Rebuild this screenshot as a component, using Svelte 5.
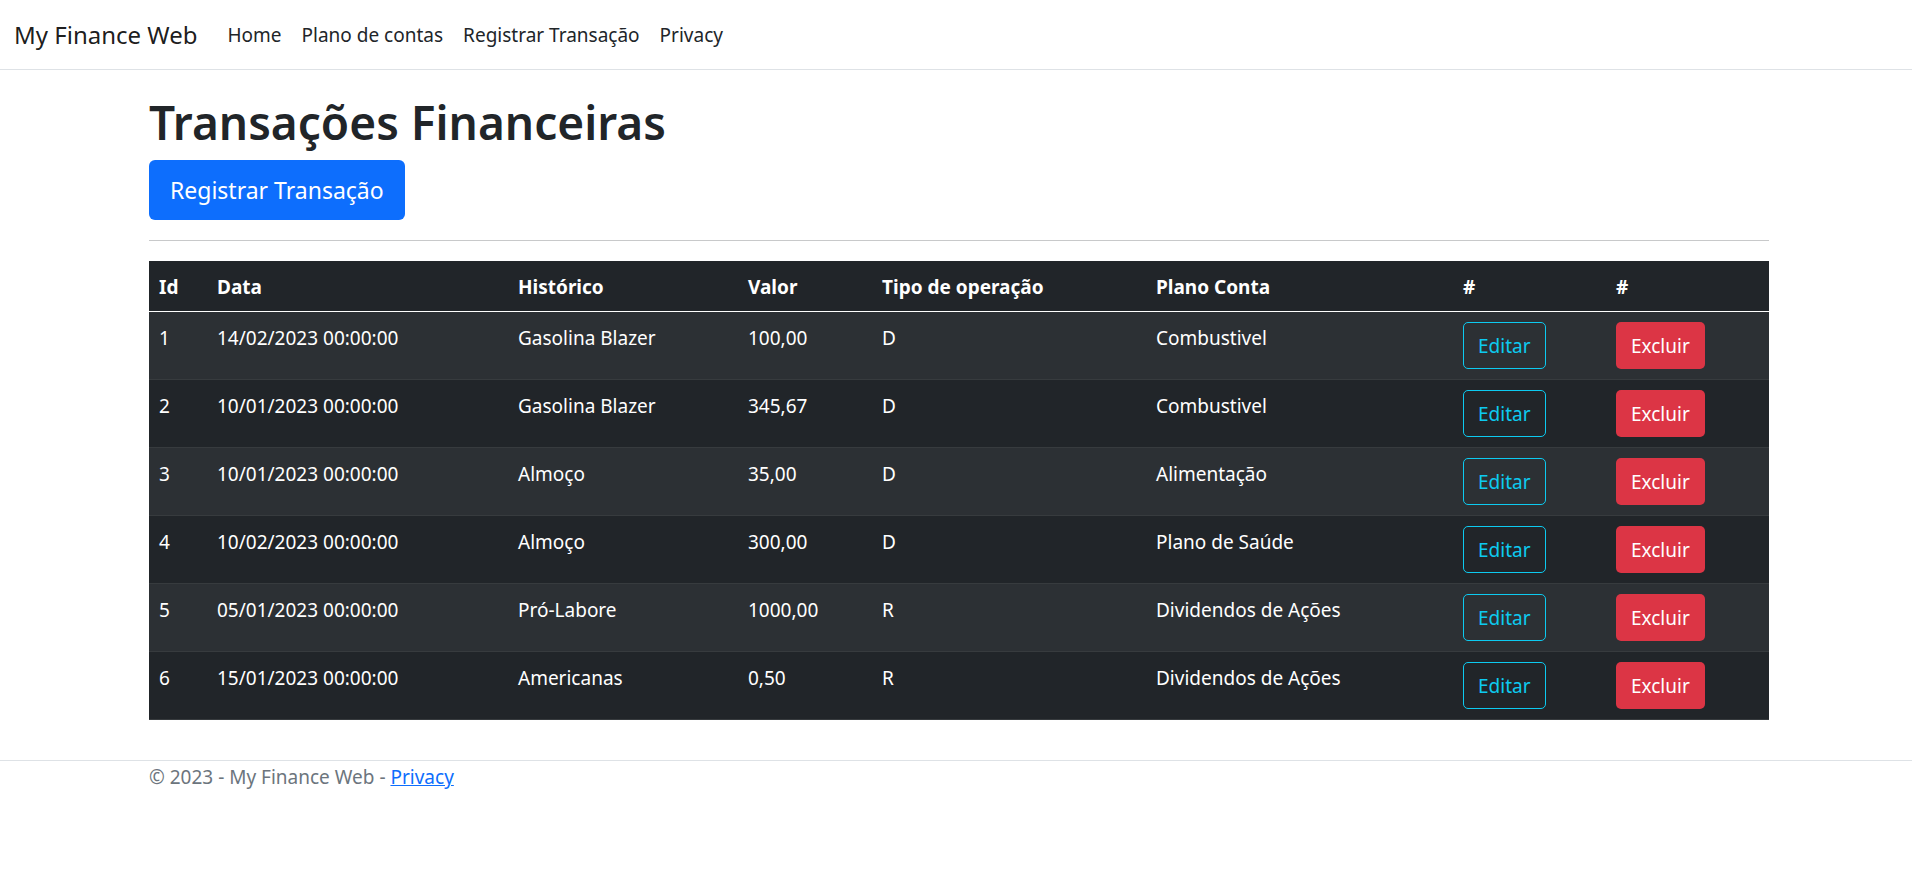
<script>
  const links = ['Home', 'Plano de contas', 'Registrar Transação', 'Privacy'];

  const transactions = [
    { id: 1, date: '14/02/2023 00:00:00', history: 'Gasolina Blazer', value: '100,00', type: 'D', account: 'Combustivel' },
    { id: 2, date: '10/01/2023 00:00:00', history: 'Gasolina Blazer', value: '345,67', type: 'D', account: 'Combustivel' },
    { id: 3, date: '10/01/2023 00:00:00', history: 'Almoço', value: '35,00', type: 'D', account: 'Alimentação' },
    { id: 4, date: '10/02/2023 00:00:00', history: 'Almoço', value: '300,00', type: 'D', account: 'Plano de Saúde' },
    { id: 5, date: '05/01/2023 00:00:00', history: 'Pró-Labore', value: '1000,00', type: 'R', account: 'Dividendos de Ações' },
    { id: 6, date: '15/01/2023 00:00:00', history: 'Americanas', value: '0,50', type: 'R', account: 'Dividendos de Ações' }
  ];
</script>

<header>
  <nav>
    <a class="brand" href="#home">My Finance Web</a>
    <ul>
      {#each links as link}
        <li><a href="#{link}">{link}</a></li>
      {/each}
    </ul>
  </nav>
</header>

<main class="container">
  <h1>Transações Financeiras</h1>
  <button type="button" class="btn primary">Registrar Transação</button>
  <hr />
  <table>
    <colgroup>
      <col class="id" />
      <col class="date" />
      <col class="history" />
      <col class="value" />
      <col class="type" />
      <col class="account" />
      <col class="edit" />
      <col class="delete" />
    </colgroup>
    <thead>
      <tr>
        <th scope="col">Id</th>
        <th scope="col">Data</th>
        <th scope="col">Histórico</th>
        <th scope="col">Valor</th>
        <th scope="col">Tipo de operação</th>
        <th scope="col">Plano Conta</th>
        <th scope="col">#</th>
        <th scope="col">#</th>
      </tr>
    </thead>
    <tbody>
      {#each transactions as t (t.id)}
        <tr>
          <td>{t.id}</td>
          <td>{t.date}</td>
          <td>{t.history}</td>
          <td>{t.value}</td>
          <td>{t.type}</td>
          <td>{t.account}</td>
          <td><button type="button" class="btn info">Editar</button></td>
          <td><button type="button" class="btn danger">Excluir</button></td>
        </tr>
      {/each}
    </tbody>
  </table>
</main>

<footer>
  <div class="container">© 2023 - My Finance Web - <a href="#Privacy">Privacy</a></div>
</footer>

<style>
  :global(body) {
    margin: 0;
    background: #fff;
    color: #212529;
    font-family: 'Noto Sans', sans-serif;
    font-size: 19px;
    line-height: 32px;
  }

  header {
    border-bottom: 1px solid #dee2e6;
  }

  nav {
    display: flex;
    align-items: center;
    gap: 20px;
    padding: 10px 14px 9px;
    line-height: 30px;
  }

  nav a {
    color: #212529;
    text-decoration: none;
  }

  .brand {
    color: rgba(0, 0, 0, 0.9);
    font-size: 24px;
  }

  ul {
    display: flex;
    margin: 0;
    padding: 0;
    list-style: none;
  }

  li a {
    display: block;
    padding: 10px;
  }

  .container {
    box-sizing: border-box;
    max-width: 1650px;
    margin: 0 auto;
    padding: 0 12px 0 18px;
  }

  h1 {
    margin: 20px 0 6px;
    font-size: 46px;
    font-weight: 600;
    line-height: 64px;
  }

  .btn {
    display: block;
    box-sizing: border-box;
    height: 47px;
    padding: 0 14px;
    border: 1px solid transparent;
    border-radius: 5px;
    font-family: inherit;
    font-size: 19px;
    line-height: 30px;
    color: #fff;
    cursor: pointer;
  }

  .primary {
    height: 60px;
    padding: 0 20px;
    border-radius: 6px;
    background: #0d6efd;
    font-size: 23px;
  }

  .info {
    border-color: #0dcaf0;
    background: transparent;
    color: #0dcaf0;
  }

  .danger {
    background: #dc3545;
  }

  hr {
    height: 1px;
    margin: 20px 0;
    border: 0;
    background: #c8c9ca;
  }

  table {
    width: 100%;
    table-layout: fixed;
    border-spacing: 0;
    background: #212529;
    color: #fff;
  }

  .id { width: 58px; }
  .date { width: 301px; }
  .history { width: 230px; }
  .value { width: 134px; }
  .type { width: 274px; }
  .account { width: 307px; }
  .edit { width: 153px; }
  .delete { width: 163px; }

  th,
  td {
    padding: 10px;
    border-bottom: 1px solid #373b3e;
    text-align: left;
    vertical-align: top;
  }

  th {
    padding-bottom: 8px;
    border-color: #fff;
    font-weight: 700;
  }

  tbody tr:nth-child(odd) {
    background: #2c3034;
  }

  footer {
    margin-top: 40px;
    border-top: 1px solid #dee2e6;
    color: #6c757d;
  }

  footer a {
    color: #0d6efd;
  }
</style>
